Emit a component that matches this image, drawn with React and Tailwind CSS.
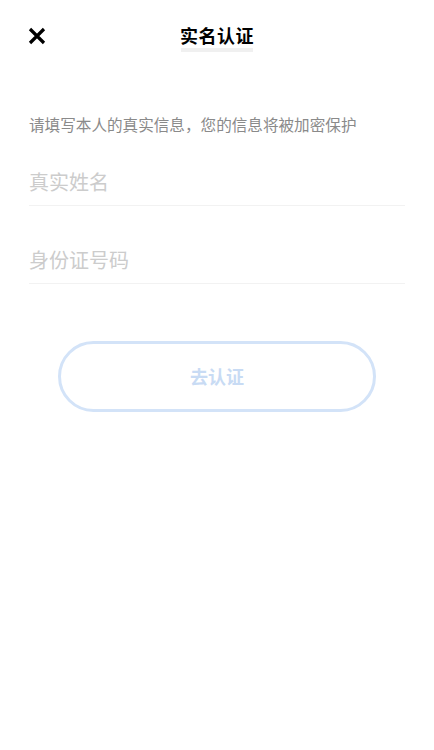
export default function App() {
  const font = { fontFamily: '"Noto Sans CJK SC", "Noto Sans", sans-serif' };

  return (
    <div className="w-[434px] h-[750px] bg-white relative" style={font}>
      {/* Header */}
      <div className="relative h-[72px] flex justify-center">
        <button className="absolute left-[27px] top-[26px] w-[19px] h-[19px] flex items-center justify-center">
          <svg width="18" height="18" viewBox="0 0 18 18">
            <path d="M2 2 L16 16 M16 2 L2 16" stroke="#000" strokeWidth="3.2" strokeLinecap="butt" />
          </svg>
        </button>
        <div className="mt-[22px] flex flex-col items-center">
          <h1 className="text-[18px] leading-[26px] font-bold text-black tracking-[0.5px]">实名认证</h1>
          <div className="w-[72px] h-[4px] bg-[#f0f0f0]"></div>
        </div>
      </div>

      {/* Form */}
      <div className="px-[29px] pt-[40px]">
        <p className="text-[15.6px] leading-[24px] text-[#8a8a8a]">请填写本人的真实信息，您的信息将被加密保护</p>

        <div className="mt-[30px] border-b border-[#f2f2f2] h-[40px] flex items-start">
          <input
            className="w-full text-[20px] leading-[32px] outline-none placeholder-[#cccccc] text-[#333]"
            placeholder="真实姓名"
            style={font}
          />
        </div>
        <div className="mt-[38px] border-b border-[#f2f2f2] h-[40px] flex items-start">
          <input
            className="w-full text-[20px] leading-[32px] outline-none placeholder-[#cccccc] text-[#333]"
            placeholder="身份证号码"
            style={font}
          />
        </div>
      </div>

      {/* Button */}
      <div className="flex justify-center mt-[57px]">
        <button className="w-[318px] h-[71px] rounded-full border-[3px] border-[#d3e3f8] text-[18px] font-bold text-[#c8dbf4]">
          去认证
        </button>
      </div>
    </div>
  );
}
